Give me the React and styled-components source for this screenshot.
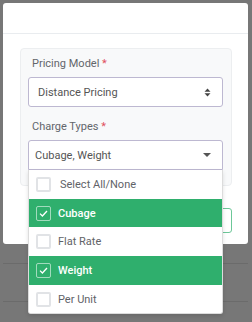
import React from 'react';
import styled, { createGlobalStyle } from 'styled-components';

const GlobalStyle = createGlobalStyle`
  html, body {
    margin: 0;
    padding: 0;
    background: #767676;
    font-family: Roboto, "Liberation Sans", sans-serif;
  }
  * { box-sizing: border-box; }
`;

const Screen = styled.div`
  width: 252px;
  height: 322px;
  overflow: hidden;
  position: relative;
  background: #777777;
`;

const Backdrop = styled.div`
  padding: 3px 4px 0 3px;
`;

const BgRows = styled.div`
  display: flex;
  flex-direction: column;
  margin-top: 19px;
`;

const BgRow = styled.div`
  height: 38px;
  border-top: 1px solid #6b6b6b;
`;

const Modal = styled.div`
  width: 245px;
  height: 241px;
  background: #fff;
  border-radius: 3px;
  display: flex;
  flex-direction: column;
  position: relative;
`;

const Header = styled.div`
  height: 31px;
  border-bottom: 1px solid #e9ecef;
`;

const Body = styled.div`
  padding: 14px 16px 0 17px;
`;

const Card = styled.div`
  background: #f8f9fa;
  border: 1px solid #eceef0;
  border-radius: 4px;
  padding: 8px 8px 15px 7px;
`;

const Field = styled.div`
  display: flex;
  flex-direction: column;
  margin-top: ${({ $top }) => $top || 0}px;
`;

const Label = styled.label`
  font-size: 11px;
  color: #63666b;
  padding-left: 4px;
  line-height: 14px;
  margin-bottom: 6px;
  span { color: #e0505e; }
`;

const SelectBox = styled.div`
  position: relative;
  height: 30px;
  border: 1px solid #bdb8d1;
  border-radius: 3px;
  background: #fff;
  display: flex;
  align-items: center;
  justify-content: space-between;
  padding: 0 11px 0 ${({ $pad }) => $pad}px;
  font-size: 11px;
  color: #555;
  ${({ $open }) => $open && 'border-bottom-left-radius: 0; border-bottom-right-radius: 0;'}
`;

const Menu = styled.div`
  position: absolute;
  top: calc(100% + 1px);
  left: -1px;
  right: -1px;
  background: #fff;
  border: 1px solid #dcdcdc;
  border-top: none;
  border-radius: 0 0 3px 3px;
  box-shadow: 0 2px 4px rgba(0, 0, 0, 0.12);
  display: flex;
  flex-direction: column;
  z-index: 5;
  overflow: hidden;
`;

const Option = styled.div`
  height: 28.7px;
  display: flex;
  align-items: center;
  padding-left: 7px;
  background: ${({ $on }) => ($on ? '#2faf6d' : '#fff')};
  color: ${({ $on }) => ($on ? '#fff' : '#5f6368')};
  font-weight: ${({ $on }) => ($on ? 500 : 400)};
  font-size: 11px;
`;

const Check = styled.span`
  width: 15px;
  height: 15px;
  border-radius: 2px;
  border: ${({ $on }) => ($on ? '1px solid rgba(255,255,255,0.55)' : '2px solid #e1e3e6')};
  background: ${({ $on }) => ($on ? 'transparent' : '#fff')};
  display: flex;
  align-items: center;
  justify-content: center;
  flex-shrink: 0;
`;

const OptionText = styled.span`
  margin-left: ${({ $gap }) => $gap}px;
`;

const Footer = styled.div`
  display: flex;
  justify-content: flex-end;
  padding: 22px 16px 0 0;
`;

const FooterButton = styled.div`
  width: 60px;
  height: 25px;
  border: 1px solid #6cc798;
  border-radius: 3px;
`;

const UpDown = () => (
  <svg width="7" height="9" viewBox="0 0 7 9">
    <path d="M3.5 0.5 L6.5 3.7 H0.5 Z M3.5 8.5 L6.5 5.3 H0.5 Z" fill="#444" />
  </svg>
);

const Caret = () => (
  <svg width="8" height="4" viewBox="0 0 8 4">
    <path d="M0 0 H8 L4 4 Z" fill="#555" />
  </svg>
);

const Tick = () => (
  <svg width="9" height="7" viewBox="0 0 9 7">
    <path d="M1 3.6 L3.4 6 L8 1" stroke="#fff" strokeWidth="1.3" fill="none" />
  </svg>
);

const options = [
  { label: 'Select All/None', on: false, gap: 9 },
  { label: 'Cubage', on: true, gap: 7 },
  { label: 'Flat Rate', on: false, gap: 7 },
  { label: 'Weight', on: true, gap: 7 },
  { label: 'Per Unit', on: false, gap: 7 },
];

export default function App() {
  return (
    <Screen>
      <GlobalStyle />
      <Backdrop>
        <Modal>
          <Header />
          <Body>
            <Card>
              <Field>
                <Label>Pricing Model <span>*</span></Label>
                <SelectBox $pad={9}>
                  Distance Pricing
                  <UpDown />
                </SelectBox>
              </Field>
              <Field $top={13}>
                <Label>Charge Types <span>*</span></Label>
                <SelectBox $pad={6} $open>
                  Cubage, Weight
                  <Caret />
                  <Menu>
                    {options.map((o) => (
                      <Option key={o.label} $on={o.on}>
                        <Check $on={o.on}>{o.on && <Tick />}</Check>
                        <OptionText $gap={o.gap}>{o.label}</OptionText>
                      </Option>
                    ))}
                  </Menu>
                </SelectBox>
              </Field>
            </Card>
          </Body>
          <Footer>
            <FooterButton />
          </Footer>
        </Modal>
        <BgRows>
          <BgRow />
          <BgRow />
        </BgRows>
      </Backdrop>
    </Screen>
  );
}
